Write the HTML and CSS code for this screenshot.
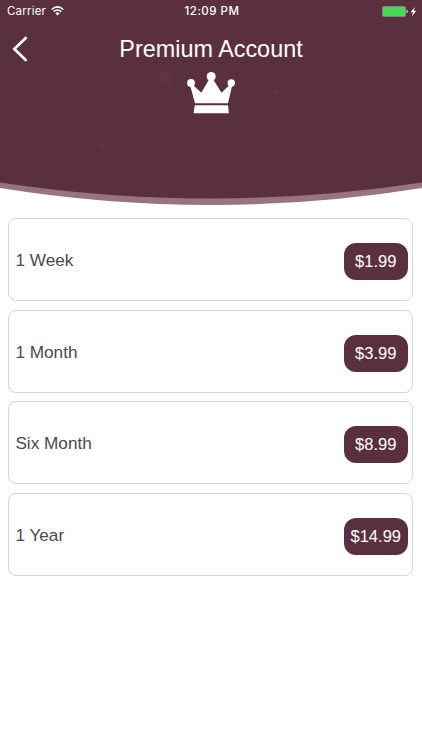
FILE: index.html
```
<!DOCTYPE html>
<html lang="en">
<head>
  <meta charset="UTF-8">
  <meta name="viewport" content="width=device-width, initial-scale=1.0">
  <title>Premium Account</title>
  <link rel="stylesheet" href="styles.css">
</head>
<body>

  <header class="header">
    <!-- Curved background -->
    <svg class="header-bg" viewBox="0 0 422 210" aria-hidden="true">
      <path fill="#987380" d="M0 0H422V188Q211 222 0 188Z"/>
      <path fill="#5a303e" d="M0 0H422V182.5Q211 214.500 0 182.500Z"/>
      <!-- Faint bubbles -->
      <g fill="#643747">
        <circle cx="166" cy="77.500" r="7" opacity=".5"/>
        <circle cx="277" cy="92" r="2.500" opacity=".5"/>
        <circle cx="101" cy="145" r="2.500" opacity=".5"/>
      </g>
    </svg>

    <div class="status-bar">
      <div class="status-left">
        <span class="carrier">Carrier</span>
        <svg class="wifi" width="13" height="10" viewBox="0 0 13 10" fill="none" stroke="#fff" stroke-width="1.6">
          <path d="M.7 3.500Q6.500-1.700 12.300 3.500M2.700 5.700Q6.500 2.300 10.300 5.700"/>
          <path fill="#fff" stroke="none" d="M4.300 7.200Q6.500 5.400 8.700 7.200L6.500 9.500Z"/>
        </svg>
      </div>
      <span class="time">12:09 PM</span>
      <div class="status-right">
        <svg width="35" height="11" viewBox="0 0 35 11">
          <rect x=".5" y=".5" width="23" height="10" rx="1.500" fill="#45d958" stroke="#89827f"/>
          <path fill="#cbbcc1" d="M24.300 3.800q1.700 0 1.700 1.700t-1.700 1.700z"/>
          <path fill="#fff" d="M33 .8L28.600 6.200H31L29.800 10.400L34.200 4.800H31.700Z"/>
        </svg>
      </div>
    </div>

    <div class="title-bar">
      <a class="back" href="#" aria-label="Back">
        <svg width="16" height="28" viewBox="0 0 16 28" fill="none" stroke="#fff" stroke-width="2.600">
          <path d="M14.500 2.200L2.300 14L14.500 25.800"/>
        </svg>
      </a>
      <h1>Premium Account</h1>
    </div>

    <svg class="crown" width="48" height="42" viewBox="0 0 48 42" fill="#fff">
      <circle cx="4" cy="11" r="3.900"/>
      <circle cx="24.200" cy="4.500" r="4.500"/>
      <circle cx="44.300" cy="11" r="3.700"/>
      <path d="M3 13L6 13L14.300 20.700L22 7.500H26.300L34.500 20.700L42.500 13H45.300L41 31.300H8Z"/>
      <path d="M7.800 33.300H41L41.900 41.300H6.600Z"/>
    </svg>
  </header>

  <main class="plans">
    <div class="plan">
      <span class="plan-name">1 Week</span>
      <button class="price">$1.99</button>
    </div>
    <div class="plan">
      <span class="plan-name">1 Month</span>
      <button class="price">$3.99</button>
    </div>
    <div class="plan">
      <span class="plan-name">Six Month</span>
      <button class="price">$8.99</button>
    </div>
    <div class="plan">
      <span class="plan-name">1 Year</span>
      <button class="price">$14.99</button>
    </div>
  </main>

</body>
</html>
```
FILE: styles.css
```
* {
  box-sizing: border-box;
}

body {
  margin: 0;
  background: #fff;
  color: #4a4a4a;
  font-family: "Liberation Sans", Arial, sans-serif;
}

.header {
  position: relative;
  height: 210px;
  color: #fff;
}

.header-bg {
  position: absolute;
  top: 0;
  left: 0;
  width: 100%;
  height: 210px;
  z-index: -1;
}

.status-bar {
  display: grid;
  grid-template-columns: 1fr auto 1fr;
  align-items: center;
  height: 22px;
  padding: 0 5px 0 7px;
  font-family: Inter, sans-serif;
  font-size: 11.5px;
}

.status-left {
  display: flex;
  align-items: center;
  gap: 5px;
}

.carrier {
  letter-spacing: 0.2px;
}

.time {
  font-weight: 500;
  letter-spacing: 0.5px;
}

.status-right {
  display: flex;
  justify-content: flex-end;
}

.title-bar {
  display: grid;
  grid-template-columns: 40px 1fr 40px;
  align-items: center;
  height: 54px;
}

.back {
  display: flex;
  padding-left: 12px;
}

h1 {
  margin: 0;
  font-size: 23.4px;
  font-weight: normal;
  text-align: center;
}

.crown {
  display: block;
  margin: -4px auto 0;
}

.plans {
  display: flex;
  flex-direction: column;
  gap: 8.600px;
  padding: 8px 9px 8px 8.400px;
}

.plan {
  display: flex;
  align-items: center;
  justify-content: space-between;
  height: 83px;
  padding: 2px 4px 0 6px;
  border: 1px solid #d6d6d6;
  border-radius: 8px;
}

.plan-name {
  font-size: 17.200px;
}

.price {
  width: 64.500px;
  height: 37px;
  margin-top: 2px;
  padding: 0;
  border: 0;
  border-radius: 12px;
  background: #5a303e;
  color: #fff;
  font-family: inherit;
  font-size: 16.500px;
}
```
